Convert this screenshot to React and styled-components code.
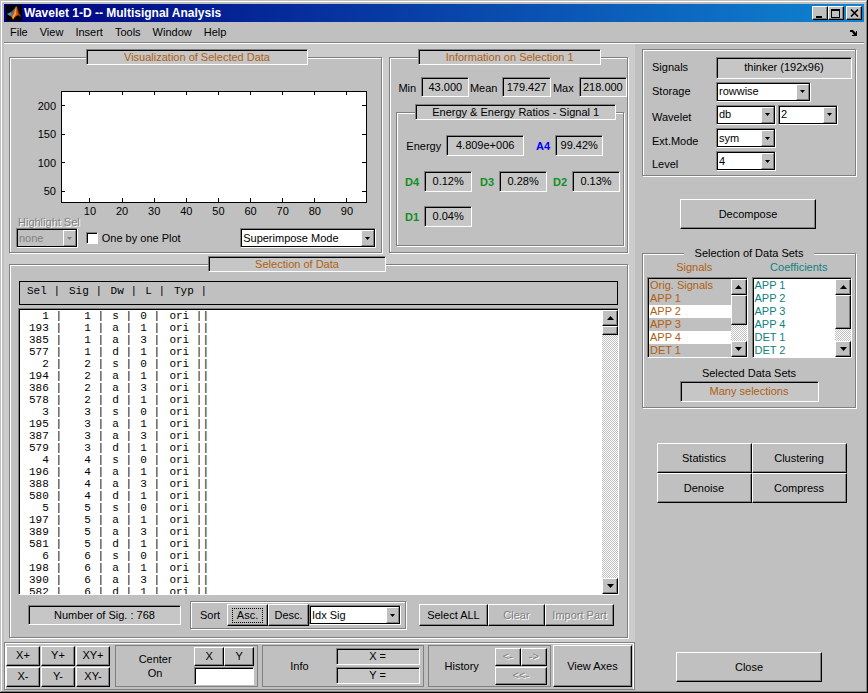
import React, { useState } from "react";
import styled, { createGlobalStyle, css } from "styled-components";

const GlobalStyle = createGlobalStyle`
  * {
    box-sizing: border-box;
  }

  body {
    margin: 0;
    background: #c0c0c0;
    color: #000;
    font: 11px/13px "Liberation Sans", Arial, sans-serif;
  }

  button,
  input,
  select {
    margin: 0;
    color: inherit;
    font: inherit;
  }
`;

const colors = {
  brown: "#b06010",
  teal: "#108080",
  green: "#109020",
  blue: "#0000ff",
};

const raised = css`
  border: 1px solid;
  border-color: #fff #000 #000 #fff;
  box-shadow: inset -1px -1px 0 #808080;
`;

const sunken = css`
  border: 1px solid;
  border-color: #808080 #fff #fff #808080;
  box-shadow: inset 1px 1px 0 #000;
`;

const etched = css`
  border: 1px solid #808080;
  box-shadow: 1px 1px 0 #fff, inset 1px 1px 0 #fff;
`;

const disabledText = css`
  color: #808080;
  text-shadow: 1px 1px 0 #fff;
`;

const Window = styled.div`
  display: flex;
  flex-direction: column;
  min-width: 860px;
  height: 100vh;
  min-height: 640px;
  padding: 4px 4px 3px;
  box-shadow: inset -1px -1px 0 #000, inset 1px 1px 0 #c0c0c0,
    inset -2px -2px 0 #808080, inset 2px 2px 0 #fff;
`;

const TitleBar = styled.header`
  display: flex;
  align-items: center;
  height: 18px;
  padding: 0 2px;
  background: linear-gradient(to right, #000080, #1084d0);
  color: #fff;
`;

const Title = styled.h1`
  flex: 1;
  margin: 0 0 0 2px;
  font: bold 12px/16px "Liberation Sans", Arial, sans-serif;
`;

const WindowButton = styled.button`
  display: grid;
  place-items: center;
  width: 16px;
  height: 14px;
  margin-left: ${(p) => (p.$gap ? 2 : 0)}px;
  padding: 0;
  background: #c0c0c0;
  ${raised}
`;

const MenuBar = styled.nav`
  display: flex;
  align-items: center;
  height: 22px;
  padding: 0 6px;
  gap: 12px;
  border-bottom: 1px solid #fff;
  box-shadow: inset 0 -1px 0 #808080;
`;

const MenuItem = styled.button`
  padding: 0;
  border: 0;
  background: none;
`;

const DockIcon = styled.svg`
  margin-left: auto;
`;

const Body = styled.div`
  display: flex;
  flex: 1;
  min-height: 0;
`;

const LeftPane = styled.main`
  display: flex;
  flex: 1;
  flex-direction: column;
  min-width: 0;
  background: #ccc;
`;

const Workspace = styled.div`
  display: flex;
  flex: 1;
  flex-direction: column;
  min-height: 0;
  gap: 11px;
  padding: 13px 7px 4px 5px;
`;

const TopRow = styled.div`
  display: flex;
  gap: 7px;
`;

const Panel = styled.section`
  display: flex;
  flex: ${(p) => p.$flex || "none"};
  flex-direction: column;
  min-width: 0;
  min-height: 0;
  margin: ${(p) => p.$margin || "0"};
  background: #c0c0c0;
  ${etched}
`;

// title plate that sits across the panel's top edge
const PanelTitle = styled.h2`
  flex: none;
  width: ${(p) => p.$width}px;
  height: 16px;
  margin: -9px 0 0 ${(p) => p.$left}px;
  background: #c6c6c6;
  color: ${(p) => p.$color || "#000"};
  font: 11px/15px "Liberation Sans", Arial, sans-serif;
  text-align: center;
  ${sunken}
`;

const Readout = styled.output`
  display: flex;
  flex: none;
  align-items: center;
  justify-content: center;
  width: ${(p) => (p.$width ? `${p.$width}px` : "auto")};
  height: ${(p) => p.$height || 20}px;
  background: #c6c6c6;
  color: ${(p) => p.$color || "#000"};
  white-space: nowrap;
  ${sunken}
`;

const Plot = styled.svg`
  flex: none;
  align-self: stretch;
  width: calc(100% - 66px);
  height: 111px;
  margin: 26px 15px 14px 51px;
  overflow: visible;
  font-size: 11px;
  shape-rendering: crispEdges;
`;

const PlotControls = styled.div`
  display: flex;
  align-items: flex-end;
  padding: 0 5px 4px 6px;
`;

const Stack = styled.div`
  display: flex;
  flex-direction: column;
`;

const DisabledLabel = styled.label`
  padding-left: 2px;
  line-height: 12px;
  ${disabledText}
`;

const CheckLabel = styled.label`
  display: flex;
  flex: 1;
  align-items: center;
  height: 20px;
  margin-left: 6px;
  gap: 4px;
`;

const CheckBox = styled.input`
  width: 12px;
  height: 12px;
  appearance: none;
  background: #fff;
  ${sunken}

  &:checked {
    background: #000;
  }
`;

const SelectFrame = styled.span`
  position: relative;
  display: block;
  flex: none;
  width: ${(p) => p.$width}px;
  height: 20px;
`;

const SelectBox = styled.select`
  display: block;
  width: 100%;
  height: 100%;
  padding: 0 16px 0 2px;
  appearance: none;
  border: 1px solid;
  border-color: #808080 #fff #fff #808080;
  border-radius: 0;
  background: #fff;
  box-shadow: inset 1px 1px 0 #000, inset -1px -1px 0 #000;

  &:disabled {
    background: #c0c0c0;
    color: #808080;
    opacity: 1;
  }
`;

const SelectArrow = styled.span`
  position: absolute;
  top: 2px;
  right: 2px;
  bottom: 2px;
  display: grid;
  place-items: center;
  width: 13px;
  border: 1px solid;
  border-color: #fff #808080 #808080 #fff;
  background: #c0c0c0;
  color: ${(p) => (p.$disabled ? "#808080" : "#000")};
  pointer-events: none;
`;

const StatGrid = styled.div`
  display: grid;
  grid-template-columns: ${(p) => p.$columns};
  align-items: center;
  margin: ${(p) => p.$margin};
  row-gap: 14px;
`;

const StatLabel = styled.span`
  padding: 2px 5px 0 0;
  color: ${(p) => p.$color || "#000"};
  font-weight: ${(p) => (p.$color ? "bold" : "normal")};
  text-align: right;
  white-space: nowrap;
`;

const ListHeader = styled.div`
  flex: none;
  height: 24px;
  margin: 9px 9px 0;
  padding: 3px 0 0 5px;
  border: 1px solid #000;
`;

const ListBox = styled.div`
  display: flex;
  flex: 1;
  min-height: 60px;
  margin: 3px 8px 0;
  padding: 1px 0 0 1px;
  background: #fff;
  ${sunken}
`;

const ListContent = styled.div`
  flex: 1;
  min-width: 0;
  overflow: hidden;
`;

const SignalTable = styled.table`
  border-collapse: collapse;
  table-layout: fixed;
  font: 11px/12px "Liberation Mono", "Courier New", monospace;

  td,
  th {
    height: 12px;
    padding: 0;
    font-weight: normal;
    text-align: right;
    white-space: pre;
  }
`;

const Col = styled.col`
  width: ${(p) => p.$width}px;
`;

const ScrollTrack = styled.div`
  display: flex;
  flex: none;
  flex-direction: column;
  width: 16px;
  background: repeating-conic-gradient(#fff 0 25%, #c0c0c0 0 50%) 0 0 / 2px 2px;
`;

const ScrollButton = styled.button`
  display: grid;
  flex: none;
  place-items: center;
  height: 16px;
  padding: 0;
  background: #c0c0c0;
  color: #000;
  ${raised}
`;

const ScrollThumb = styled.div`
  height: ${(p) => p.$size}px;
  margin-bottom: auto;
  background: #c0c0c0;
  ${raised}
`;

const ListFooter = styled.div`
  display: flex;
  flex: none;
  align-items: center;
  padding: 6px 13px 8px 18px;
`;

const SortFrame = styled.div`
  display: flex;
  align-items: center;
  width: 216px;
  height: 28px;
  margin: 0 13px 0 9px;
  padding: 0 4px 0 9px;
  ${etched}
`;

const SortLabel = styled.span`
  flex: 1;
`;

const Button = styled.button`
  flex: ${(p) => p.$flex || "none"};
  width: ${(p) => (p.$width ? `${p.$width}px` : "auto")};
  height: ${(p) => p.$height || 22}px;
  min-width: 0;
  padding: 0;
  background: #c0c0c0;
  white-space: nowrap;
  ${raised}

  &:disabled {
    ${disabledText}
  }
`;

const FocusMark = styled.span`
  display: inline-block;
  padding: 0 4px;
  border: 1px dotted #000;
`;

const Toolbar = styled.footer`
  display: flex;
  flex: none;
  height: 48px;
  padding: 2px 2px 2px 1px;
  gap: 4px;
  border: 1px solid #808080;
  background: #c0c0c0;
  box-shadow: inset 1px 1px 0 #fff, inset -1px 0 0 #fff;
`;

const ZoomGrid = styled.div`
  display: grid;
  grid-template-columns: repeat(3, 34px);
  align-content: center;
  margin-right: 1px;
  gap: 1px;
`;

const ToolFrame = styled.section`
  display: flex;
  flex: ${(p) => p.$grow} 1 0;
  align-items: center;
  padding-right: 3px;
  border: 1px solid #808080;
`;

const ToolLabel = styled.h2`
  flex: 1;
  margin: 0;
  font: 11px/14px "Liberation Sans", Arial, sans-serif;
  text-align: center;
`;

const PairGrid = styled.div`
  display: grid;
  grid-template-columns: 1fr 1fr;
  width: ${(p) => p.$width}px;
  row-gap: 1px;
`;

const WideButton = styled(Button)`
  grid-column: span 2;
`;

const CenterInput = styled.input`
  grid-column: span 2;
  width: 100%;
  height: 18px;
  padding: 0 3px;
  border-radius: 0;
  background: #fff;
  ${sunken}
`;

const ReadoutStack = styled(Stack)`
  width: 84px;
  gap: 2px;
`;

const ToolPair = styled.div`
  display: flex;
  flex: 204 1 0;
  gap: 2px;
`;

const RightPane = styled.aside`
  display: flex;
  flex: none;
  flex-direction: column;
  align-items: center;
  width: 229px;
  padding: 5px 8px 8px 7px;
`;

const Settings = styled.div`
  display: grid;
  grid-template-columns: 64px 1fr;
  align-items: center;
  align-self: stretch;
  height: 127px;
  padding: 6px 3px 3px 9px;
  row-gap: 2px;
  ${etched}
`;

const SettingLabel = styled.label`
  padding-top: ${(p) => (p.$low ? 6 : 0)}px;
`;

const SelectRow = styled.div`
  display: flex;
  gap: 2px;
`;

const DecomposeButton = styled(Button)`
  margin: 23px 2px 0 0;
`;

const DataSets = styled.fieldset`
  display: flex;
  flex: none;
  flex-direction: column;
  align-items: center;
  align-self: stretch;
  min-width: 0;
  height: 162px;
  margin: 17px 0 0;
  padding: 0;
  ${etched}
`;

const PlainLegend = styled.legend`
  margin: 0 auto;
  padding: 0 11px;
  background: #c0c0c0;
  line-height: 14px;
`;

const DataLists = styled.div`
  display: flex;
  align-self: stretch;
  margin: 0 3px 9px 4px;
  gap: 4px;
`;

const DataColumn = styled.div`
  flex: 1;
  min-width: 0;
  color: ${(p) => p.$color};
`;

const DataHeading = styled.h3`
  height: 17px;
  margin: 0;
  padding-right: 6px;
  font: 11px/14px "Liberation Sans", Arial, sans-serif;
  text-align: center;
`;

const DataListBox = styled.div`
  display: flex;
  height: 81px;
  padding: 1px 0 0 1px;
  background: #fff;
  ${sunken}
`;

const DataList = styled.ul`
  flex: 1;
  margin: 0;
  padding: 0;
  list-style: none;
`;

const DataItem = styled.li`
  padding-left: 1px;
  background: ${(p) => (p.$shaded ? "#c0c0c0" : "#fff")};
  line-height: 13px;
`;

const SelectedLabel = styled.span`
  margin-bottom: 1px;
`;

const ActionGrid = styled.div`
  display: grid;
  grid-template-columns: 95px 95px;
  margin: 35px 0 auto 5px;
`;

const xTicks = [10, 20, 30, 40, 50, 60, 70, 80, 90];
const yTicks = [50, 100, 150, 200];
const xPos = (v) => `${((v - 1) / 95) * 100}%`;
const yPos = (v) => `${((226 - v) / 195) * 100}%`;

// every signal has four rows, 192 indexes apart
const kinds = [
  ["s", 0],
  ["a", 1],
  ["a", 3],
  ["d", 1],
];
const signalRows = [1, 2, 3, 4, 5, 6].flatMap((sig) =>
  kinds.map(([dw, level], i) => ({ sel: sig + i * 192, sig, dw, level }))
);

const signalSets = [
  { name: "Orig. Signals", shaded: true },
  { name: "APP 1", shaded: true },
  { name: "APP 2" },
  { name: "APP 3", shaded: true },
  { name: "APP 4" },
  { name: "DET 1", shaded: true },
];
const coefficientSets = ["APP 1", "APP 2", "APP 3", "APP 4", "DET 1", "DET 2"].map(
  (name) => ({ name })
);

const Logo = () => (
  <svg width="16" height="16" viewBox="0 0 16 16" aria-hidden="true">
    <rect width="16" height="16" fill="#000" />
    <path d="M1 9 L5 7 L7 9 L4 11 Z" fill="#3c9cc8" />
    <path d="M5 7 L8 4 L10 2 L8 9 L6 10 Z" fill="#4a6a80" />
    <path d="M4 11 L7 9 L10 1 L11 2 L12 6 L15 12 L12 10 L9 12 L7 15 L6 12 Z" fill="#d85818" />
    <path d="M10 2 L10 9 L7 14 L6 12 L8 9 Z" fill="#f8a040" />
    <path d="M11 3 L12 6 L15 12 L12 9 Z" fill="#801808" />
  </svg>
);

const Arrow = ({ up, small }) => {
  const w = small ? 5 : 7;
  const h = small ? 3 : 4;
  const d = up ? `M0 ${h} H${w} L${w / 2} 0 Z` : `M0 0 H${w} L${w / 2} ${h} Z`;
  return (
    <svg width={w} height={h} viewBox={`0 0 ${w} ${h}`} aria-hidden="true">
      <path d={d} fill="currentColor" />
    </svg>
  );
};

const Select = ({ options, width, disabled, ...rest }) => (
  <SelectFrame $width={width}>
    <SelectBox disabled={disabled} {...rest}>
      {options.map((option) => (
        <option key={option}>{option}</option>
      ))}
    </SelectBox>
    <SelectArrow $disabled={disabled}>
      <Arrow small />
    </SelectArrow>
  </SelectFrame>
);

const ScrollBar = ({ thumb }) => (
  <ScrollTrack>
    <ScrollButton type="button" aria-label="Scroll up">
      <Arrow up />
    </ScrollButton>
    <ScrollThumb $size={thumb} />
    <ScrollButton type="button" aria-label="Scroll down">
      <Arrow />
    </ScrollButton>
  </ScrollTrack>
);

const Stat = ({ label, value, color, height }) => (
  <>
    <StatLabel $color={color}>{label}</StatLabel>
    <Readout $height={height} aria-label={label}>
      {value}
    </Readout>
  </>
);

const AxesPlot = () => (
  <Plot role="img" aria-label="Selected data axes">
    <rect width="100%" height="100%" fill="#fff" stroke="#000" />
    {xTicks.map((v) => (
      <g key={v} stroke="#000">
        <svg x={xPos(v)} overflow="visible">
          <line x1="0" x2="0" y1="0" y2="4" />
        </svg>
        <svg x={xPos(v)} y="100%" overflow="visible">
          <line x1="0" x2="0" y1="-4" y2="0" />
          <text y="13" stroke="none" textAnchor="middle">
            {v}
          </text>
        </svg>
      </g>
    ))}
    {yTicks.map((v) => (
      <g key={v} stroke="#000">
        <svg y={yPos(v)} overflow="visible">
          <line x1="0" x2="4" y1="0" y2="0" />
          <text x="-5" y="4" stroke="none" textAnchor="end">
            {v}
          </text>
        </svg>
        <svg x="100%" y={yPos(v)} overflow="visible">
          <line x1="-4" x2="0" y1="0" y2="0" />
        </svg>
      </g>
    ))}
  </Plot>
);

const VisualizationPanel = () => {
  const [oneByOne, setOneByOne] = useState(false);

  return (
    <Panel $flex="373 1 0">
      <PanelTitle $width={222} $left={76} $color={colors.brown}>
        Visualization of Selected Data
      </PanelTitle>
      <AxesPlot />
      <PlotControls>
        <Stack>
          <DisabledLabel htmlFor="highlight">Highlight Sel</DisabledLabel>
          <Select id="highlight" width={62} options={["none"]} disabled />
        </Stack>
        <CheckLabel>
          <CheckBox
            type="checkbox"
            checked={oneByOne}
            onChange={(e) => setOneByOne(e.target.checked)}
          />
          One by one Plot
        </CheckLabel>
        <Select
          width={136}
          options={["Superimpose Mode", "Separate Mode"]}
          aria-label="Display mode"
        />
      </PlotControls>
    </Panel>
  );
};

const InformationPanel = () => (
  <Panel $flex="238 1 0">
    <PanelTitle $width={183} $left={28} $color={colors.brown}>
      Information on Selection 1
    </PanelTitle>
    <StatGrid $columns="23px 1fr 33px 1fr 28px 1fr" $margin="12px 0 15px 8px">
      <Stat label="Min" value="43.000" />
      <Stat label="Mean" value="179.427" />
      <Stat label="Max" value="218.000" />
    </StatGrid>
    <Panel $flex="1" $margin="0 3px 6px 6px">
      <PanelTitle $width={201} $left={18}>
        Energy &amp; Energy Ratios - Signal 1
      </PanelTitle>
      <StatGrid $columns="49px 78px 31px 48px" $margin="15px 0 15px">
        <Stat label="Energy" value="4.809e+006" height={21} />
        <Stat label="A4" value="99.42%" color={colors.blue} height={21} />
      </StatGrid>
      <StatGrid $columns="27px 1fr 27px 1fr 25px 1fr" $margin="0 3px 0 0">
        <Stat label="D4" value="0.12%" color={colors.green} height={21} />
        <Stat label="D3" value="0.28%" color={colors.green} height={21} />
        <Stat label="D2" value="0.13%" color={colors.green} height={21} />
        <Stat label="D1" value="0.04%" color={colors.green} height={21} />
      </StatGrid>
    </Panel>
  </Panel>
);

const SelectionPanel = () => (
  <Panel $flex="1">
    <PanelTitle $width={178} $left={198} $color={colors.brown}>
      Selection of Data
    </PanelTitle>
    <ListHeader>
      <SignalTable>
        <colgroup>
          {[35, 42, 35, 28, 42].map((width, i) => (
            <Col key={i} $width={width} />
          ))}
        </colgroup>
        <thead>
          <tr>
            {["Sel", "Sig", "Dw", "L", "Typ"].map((name) => (
              <th key={name} scope="col">{`${name} |`}</th>
            ))}
          </tr>
        </thead>
      </SignalTable>
    </ListHeader>
    <ListBox>
      <ListContent>
        <SignalTable>
          <colgroup>
            {[42, 42, 28, 28, 49].map((width, i) => (
              <Col key={i} $width={width} />
            ))}
          </colgroup>
          <tbody>
            {signalRows.map((row) => (
              <tr key={row.sel}>
                <td>{`${row.sel} |`}</td>
                <td>{`${row.sig} |`}</td>
                <td>{`${row.dw} |`}</td>
                <td>{`${row.level} |`}</td>
                <td>ori ||</td>
              </tr>
            ))}
          </tbody>
        </SignalTable>
      </ListContent>
      <ScrollBar thumb={9} />
    </ListBox>
    <ListFooter>
      <Readout $width={153}>Number of Sig. : 768</Readout>
      <SortFrame>
        <SortLabel>Sort</SortLabel>
        <Button $width={41}>
          <FocusMark>Asc.</FocusMark>
        </Button>
        <Button $width={41}>Desc.</Button>
        <Select width={92} options={["Idx Sig", "Idx Sel"]} aria-label="Sort by" />
      </SortFrame>
      <Button $flex="69 1 0">Select ALL</Button>
      <Button $flex="57 1 0" disabled>
        Clear
      </Button>
      <Button $flex="69 1 0" disabled>
        Import Part
      </Button>
    </ListFooter>
  </Panel>
);

const AxesToolbar = () => (
  <Toolbar>
    <ZoomGrid>
      {["X+", "Y+", "XY+", "X-", "Y-", "XY-"].map((name) => (
        <Button key={name} $height={20}>
          {name}
        </Button>
      ))}
    </ZoomGrid>
    <ToolFrame $grow={138}>
      <ToolLabel>
        Center
        <br />
        On
      </ToolLabel>
      <PairGrid $width={60}>
        <Button $height={19}>X</Button>
        <Button $height={19}>Y</Button>
        <CenterInput aria-label="Center on" />
      </PairGrid>
    </ToolFrame>
    <ToolFrame $grow={156}>
      <ToolLabel>Info</ToolLabel>
      <ReadoutStack>
        <Readout $height={17}>X =</Readout>
        <Readout $height={17}>Y =</Readout>
      </ReadoutStack>
    </ToolFrame>
    <ToolPair>
      <ToolFrame $grow={118}>
        <ToolLabel>History</ToolLabel>
        <PairGrid $width={52}>
          <Button $height={18} disabled>
            &lt;-
          </Button>
          <Button $height={18} disabled>
            -&gt;
          </Button>
          <WideButton $height={18} disabled>
            &lt;&lt;-
          </WideButton>
        </PairGrid>
      </ToolFrame>
      <Button $flex="77 1 0" $height={42}>
        View Axes
      </Button>
    </ToolPair>
  </Toolbar>
);

const DataSetList = ({ title, items, color, thumb }) => (
  <DataColumn $color={color}>
    <DataHeading>{title}</DataHeading>
    <DataListBox>
      <DataList>
        {items.map((item) => (
          <DataItem key={item.name} $shaded={item.shaded}>
            {item.name}
          </DataItem>
        ))}
      </DataList>
      <ScrollBar thumb={thumb} />
    </DataListBox>
  </DataColumn>
);

const SettingsPanel = () => (
  <Settings>
    <SettingLabel as="span">Signals</SettingLabel>
    <Readout $height={22} aria-label="Signals">
      thinker (192x96)
    </Readout>
    <SettingLabel htmlFor="storage">Storage</SettingLabel>
    <Select id="storage" width={95} options={["rowwise", "columnwise"]} />
    <SettingLabel htmlFor="wavelet" $low>
      Wavelet
    </SettingLabel>
    <SelectRow>
      <Select id="wavelet" width={60} options={["db", "haar", "sym"]} />
      <Select width={60} options={["2", "3", "4"]} aria-label="Wavelet number" />
    </SelectRow>
    <SettingLabel htmlFor="ext-mode" $low>
      Ext.Mode
    </SettingLabel>
    <Select id="ext-mode" width={60} options={["sym", "zpd", "per"]} />
    <SettingLabel htmlFor="level" $low>
      Level
    </SettingLabel>
    <Select id="level" width={60} options={["4", "3", "2", "1"]} />
  </Settings>
);

const App = () => (
  <>
    <GlobalStyle />
    <Window>
      <TitleBar>
        <Logo />
        <Title>Wavelet 1-D -- Multisignal Analysis</Title>
        <WindowButton type="button" aria-label="Minimize">
          <svg width="10" height="9" shapeRendering="crispEdges">
            <rect x="1" y="7" width="6" height="2" />
          </svg>
        </WindowButton>
        <WindowButton type="button" aria-label="Maximize">
          <svg width="10" height="9" shapeRendering="crispEdges">
            <path d="M0 0H9V9H0ZM1 2V8H8V2Z" fillRule="evenodd" />
          </svg>
        </WindowButton>
        <WindowButton type="button" aria-label="Close window" $gap>
          <svg width="9" height="8" viewBox="0 0 9 8">
            <path d="M1 0.5L8 7.5M8 0.5L1 7.5" stroke="#000" strokeWidth="1.6" />
          </svg>
        </WindowButton>
      </TitleBar>
      <MenuBar>
        {["File", "View", "Insert", "Tools", "Window", "Help"].map((name) => (
          <MenuItem key={name} type="button">
            {name}
          </MenuItem>
        ))}
        <DockIcon width="8" height="6" viewBox="0 0 8 6" aria-hidden="true">
          <path d="M0 0H3L6 3V1H7V6H2V5H4L2 2H0Z" />
        </DockIcon>
      </MenuBar>
      <Body>
        <LeftPane>
          <Workspace>
            <TopRow>
              <VisualizationPanel />
              <InformationPanel />
            </TopRow>
            <SelectionPanel />
          </Workspace>
          <AxesToolbar />
        </LeftPane>
        <RightPane>
          <SettingsPanel />
          <DecomposeButton $width={136} $height={30}>
            Decompose
          </DecomposeButton>
          <DataSets>
            <PlainLegend>Selection of Data Sets</PlainLegend>
            <DataLists>
              <DataSetList
                title="Signals"
                items={signalSets}
                color={colors.brown}
                thumb={30}
              />
              <DataSetList
                title="Coefficients"
                items={coefficientSets}
                color={colors.teal}
                thumb={34}
              />
            </DataLists>
            <SelectedLabel>Selected Data Sets</SelectedLabel>
            <Readout $width={139} $height={21} $color={colors.brown}>
              Many selections
            </Readout>
          </DataSets>
          <ActionGrid>
            {["Statistics", "Clustering", "Denoise", "Compress"].map((name) => (
              <Button key={name} $height={30}>
                {name}
              </Button>
            ))}
          </ActionGrid>
          <Button $width={146} $height={30}>
            Close
          </Button>
        </RightPane>
      </Body>
    </Window>
  </>
);

export default App;
